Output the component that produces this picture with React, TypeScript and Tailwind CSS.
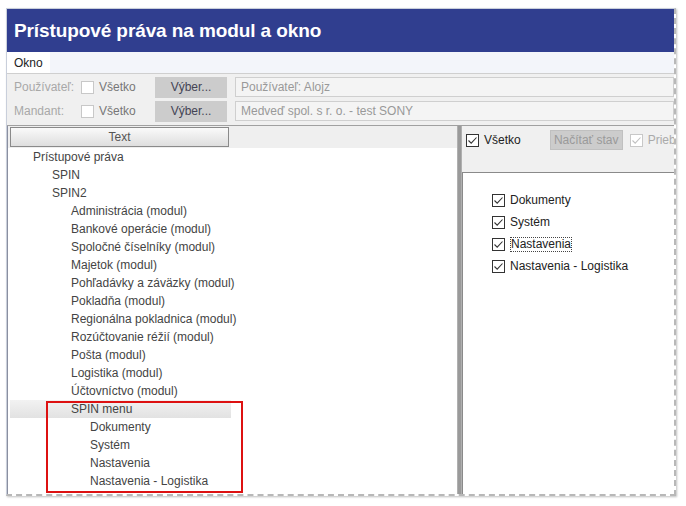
import React from "react";

const tree: { label: string; level: number }[] = [
  { label: "Prístupové práva", level: 0 },
  { label: "SPIN", level: 1 },
  { label: "SPIN2", level: 1 },
  { label: "Administrácia (modul)", level: 2 },
  { label: "Bankové operácie (modul)", level: 2 },
  { label: "Spoločné číselníky (modul)", level: 2 },
  { label: "Majetok (modul)", level: 2 },
  { label: "Pohľadávky a záväzky (modul)", level: 2 },
  { label: "Pokladňa (modul)", level: 2 },
  { label: "Regionálna pokladnica (modul)", level: 2 },
  { label: "Rozúčtovanie réžií (modul)", level: 2 },
  { label: "Pošta (modul)", level: 2 },
  { label: "Logistika (modul)", level: 2 },
  { label: "Účtovníctvo (modul)", level: 2 },
  { label: "SPIN menu", level: 2 },
  { label: "Dokumenty", level: 3 },
  { label: "Systém", level: 3 },
  { label: "Nastavenia", level: 3 },
  { label: "Nastavenia - Logistika", level: 3 },
];

const indent = ["pl-[23px]", "pl-[42px]", "pl-[61px]", "pl-[80px]"];

function Check({ checked, disabled }: { checked?: boolean; disabled?: boolean }) {
  return (
    <span
      className={
        "flex items-center justify-center w-[13px] h-[13px] border bg-white shrink-0 " +
        (disabled ? "border-[#c8c8c8]" : "border-[#333]")
      }
    >
      {checked && (
        <svg width="11" height="11" viewBox="0 0 11 11">
          <path
            d="M1.5 5.5 L4.2 8.2 L9.5 2.5"
            fill="none"
            stroke={disabled ? "#c0c0c0" : "#333"}
            strokeWidth="1.1"
          />
        </svg>
      )}
    </span>
  );
}

function FilterRow({ label, value }: { label: string; value: string }) {
  return (
    <div className="flex items-center h-[22px] whitespace-nowrap">
      <span className="w-[74px] shrink-0 pl-[7px] text-[#a8a8a8]">{label}</span>
      <span className="flex items-center w-[74px] shrink-0">
        <span className="w-[13px] h-[13px] border border-[#c8c8c8] bg-white" />
        <span className="ml-[5px] text-[#777]">Všetko</span>
      </span>
      <div className="w-[72px] shrink-0 h-[21px] bg-[#cccccc] flex items-center justify-center text-[#445]">
        Výber...
      </div>
      <div className="ml-[8px] flex-1 h-[20px] border border-[#cfcfcf] bg-[#f4f4f4] flex items-center pl-[5px] text-[#999]">
        {value}
      </div>
    </div>
  );
}

export default function App() {
  return (
    <div className="w-[686px] h-[506px] bg-white relative overflow-hidden font-['Liberation_Sans',Arial,sans-serif] text-[12px]">
      <div className="absolute left-[6px] top-[8px] w-[670px] h-[488px] border-t border-l border-[#c9cfdb] border-r-2 border-b-2 border-r-[#b8b8b8] border-b-[#b8b8b8] [border-style:solid_dashed_dashed_solid] flex flex-col overflow-hidden shadow-[1px_1px_2px_rgba(0,0,0,0.25)]">
        <div className="h-[43px] bg-[#303e8f] flex items-center pl-[7px] pt-[2px] text-white font-bold text-[19px] tracking-[-0.1px]">
          Prístupové práva na modul a okno
        </div>
        <div className="h-[22px] bg-[#f3f5fa] border-b border-[#cfcfcf] flex">
          <div className="w-[43px] bg-white flex items-center pl-[7px] text-[#222]">Okno</div>
        </div>
        <div className="bg-[#f0f0f0] pt-[2px] pb-[3px] flex flex-col gap-[2px] border-b border-[#a0a0a0]">
          <FilterRow label="Používateľ:" value="Používateľ: Alojz" />
          <FilterRow label="Mandant:" value="Medveď spol. s r. o. - test SONY" />
        </div>
        <div className="flex-1 flex min-h-0">
          <div className="w-[450px] shrink-0 border-l border-[#8a8fa0] flex flex-col relative">
            <div className="h-[22px] bg-[#efefef] flex items-start pl-[2px] pt-[1px]">
              <div className="w-[219px] h-[20px] border border-[#8a8a8a] bg-gradient-to-b from-[#fafafa] to-[#dedede] flex items-center justify-center text-[#555]">
                Text
              </div>
            </div>
            <div className="flex flex-col">
              {tree.map((t) => (
                <div key={t.label} className="h-[18px] flex items-center">
                  <div
                    className={
                      "h-[18px] w-[221px] ml-[2px] flex items-center whitespace-nowrap text-[#444] " +
                      indent[t.level] +
                      (t.label === "SPIN menu"
                        ? " bg-gradient-to-b from-[#f2f2f2] to-[#e2e2e2]"
                        : "")
                    }
                  >
                    {t.label}
                  </div>
                </div>
              ))}
            </div>
            <div className="absolute left-[38px] top-[275px] w-[197px] h-[92px] border-2 border-[#dd1111]" />
          </div>
          <div className="w-[5px] shrink-0 bg-[#9a9a9a] border-x border-[#b0b0b0]" />
          <div className="flex-1 min-w-0 flex flex-col overflow-hidden">
            <div className="h-[46px] bg-[#f0f0f0] flex items-start pt-[4px] pl-[4px] whitespace-nowrap">
              <div className="flex items-center h-[20px]">
                <Check checked />
                <span className="ml-[5px] text-[#222]">Všetko</span>
              </div>
              <div className="ml-[29px] w-[73px] shrink-0 h-[20px] bg-[#cccccc] border border-[#c0c0c0] flex items-center justify-center text-[#9a9a9a]">
                Načítať stav
              </div>
              <div className="ml-[7px] flex items-center h-[20px]">
                <Check checked disabled />
                <span className="ml-[5px] text-[#aaa]">Priebežne</span>
              </div>
            </div>
            <div className="flex-1 bg-white border-t border-l border-[#8a8a8a] pt-[16px] pl-[29px] flex flex-col">
              {["Dokumenty", "Systém", "Nastavenia", "Nastavenia - Logistika"].map((l) => (
                <div key={l} className="h-[22px] flex items-center whitespace-nowrap">
                  <Check checked />
                  <span
                    className={
                      "ml-[5px] text-[#222] " +
                      (l === "Nastavenia" ? "border border-dotted border-[#444] leading-[13px]" : "")
                    }
                  >
                    {l}
                  </span>
                </div>
              ))}
            </div>
          </div>
        </div>
      </div>
    </div>
  );
}
